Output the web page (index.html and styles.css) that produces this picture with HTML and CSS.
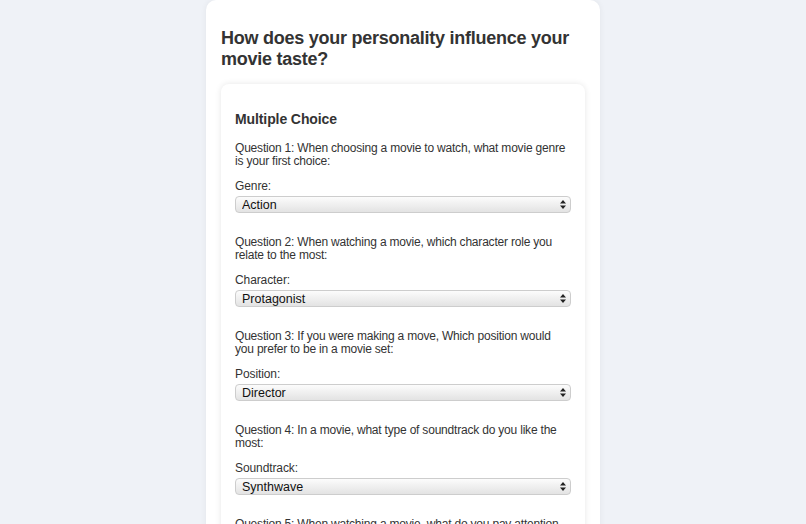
FILE: index.html
```html
<!DOCTYPE html>
<html lang="en">
<head>
    <meta charset="UTF-8">
    <meta name="viewport" content="width=device-width, initial-scale=1.0">
    <title>Movie Personality Quiz</title>
    <link rel="stylesheet" href="styles.css">
</head>
<body>
    <div class="container">
        <h1>How does your personality influence your movie taste?</h1>

        <form class="quiz-card">
            <h3>Multiple Choice</h3>

            <div class="question">
                <p>Question 1: When choosing a movie to watch, what movie genre is your first choice:</p>
                <label for="genre">Genre:</label>
                <div class="select-wrap">
                    <select id="genre" name="genre">
                        <option>Action</option>
                        <option>Comedy</option>
                        <option>Drama</option>
                        <option>Horror</option>
                    </select>
                    <svg class="arrows" width="6" height="9" viewBox="0 0 6 9"><path d="M3 0L6 3.6H0Z M3 9L6 5.4H0Z" fill="#222"/></svg>
                </div>
            </div>

            <div class="question">
                <p>Question 2: When watching a movie, which character role you relate to the most:</p>
                <label for="character">Character:</label>
                <div class="select-wrap">
                    <select id="character" name="character">
                        <option>Protagonist</option>
                        <option>Antagonist</option>
                        <option>Sidekick</option>
                    </select>
                    <svg class="arrows" width="6" height="9" viewBox="0 0 6 9"><path d="M3 0L6 3.6H0Z M3 9L6 5.4H0Z" fill="#222"/></svg>
                </div>
            </div>

            <div class="question">
                <p>Question 3: If you were making a move, Which position would you prefer to be in a movie set:</p>
                <label for="position">Position:</label>
                <div class="select-wrap">
                    <select id="position" name="position">
                        <option>Director</option>
                        <option>Actor</option>
                        <option>Writer</option>
                    </select>
                    <svg class="arrows" width="6" height="9" viewBox="0 0 6 9"><path d="M3 0L6 3.6H0Z M3 9L6 5.4H0Z" fill="#222"/></svg>
                </div>
            </div>

            <div class="question">
                <p>Question 4: In a movie, what type of soundtrack do you like the most:</p>
                <label for="soundtrack">Soundtrack:</label>
                <div class="select-wrap">
                    <select id="soundtrack" name="soundtrack">
                        <option>Synthwave</option>
                        <option>Orchestral</option>
                        <option>Rock</option>
                    </select>
                    <svg class="arrows" width="6" height="9" viewBox="0 0 6 9"><path d="M3 0L6 3.6H0Z M3 9L6 5.4H0Z" fill="#222"/></svg>
                </div>
            </div>

            <div class="question">
                <p>Question 5: When watching a movie, what do you pay attention to the most:</p>
                <label for="focus">Focus:</label>
                <div class="select-wrap">
                    <select id="focus" name="focus">
                        <option>Story</option>
                        <option>Visuals</option>
                    </select>
                    <svg class="arrows" width="6" height="9" viewBox="0 0 6 9"><path d="M3 0L6 3.6H0Z M3 9L6 5.4H0Z" fill="#222"/></svg>
                </div>
            </div>
        </form>
    </div>
</body>
</html>
```

FILE: styles.css
```css
body {
    font-family: "Liberation Sans", Arial, sans-serif;
    font-size: 12px;
    margin: 0;
    background-color: #eff2f7;
    color: #333;
}
.container {
    width: 364px;
    margin: 0 auto;
    padding: 28px 15px 20px;
    background-color: white;
    border-radius: 10px;
    box-shadow: 0 0 6px rgba(0,0,0,0.06);
}
h1 {
    font-size: 18px;
    line-height: 21px;
    letter-spacing: -0.25px;
    margin: 0 0 14px;
}
.quiz-card {
    background-color: white;
    border-radius: 8px;
    padding: 27px 14px 20px;
    box-shadow: 0 0 6px rgba(0,0,0,0.1);
}
h3 {
    font-size: 14px;
    line-height: 16px;
    letter-spacing: -0.1px;
    margin: 0 0 15px;
}
.question {
    margin-bottom: 23px;
}
.question p {
    line-height: 13px;
    letter-spacing: -0.2px;
    margin: 0 0 11px;
}
label {
    display: block;
    line-height: 14px;
    letter-spacing: -0.1px;
    margin-bottom: 3px;
}
.select-wrap {
    position: relative;
}
select {
    -webkit-appearance: none;
    appearance: none;
    display: block;
    width: 100%;
    height: 17px;
    padding: 0 0 0 6px;
    font-family: "Liberation Sans", Arial, sans-serif;
    font-size: 12.5px;
    color: #111;
    border: 1px solid #cdcdcd;
    border-radius: 4px;
    background: linear-gradient(#fcfcfc, #e3e3e3);
}
.arrows {
    position: absolute;
    right: 5px;
    top: 4px;
    pointer-events: none;
}
```
